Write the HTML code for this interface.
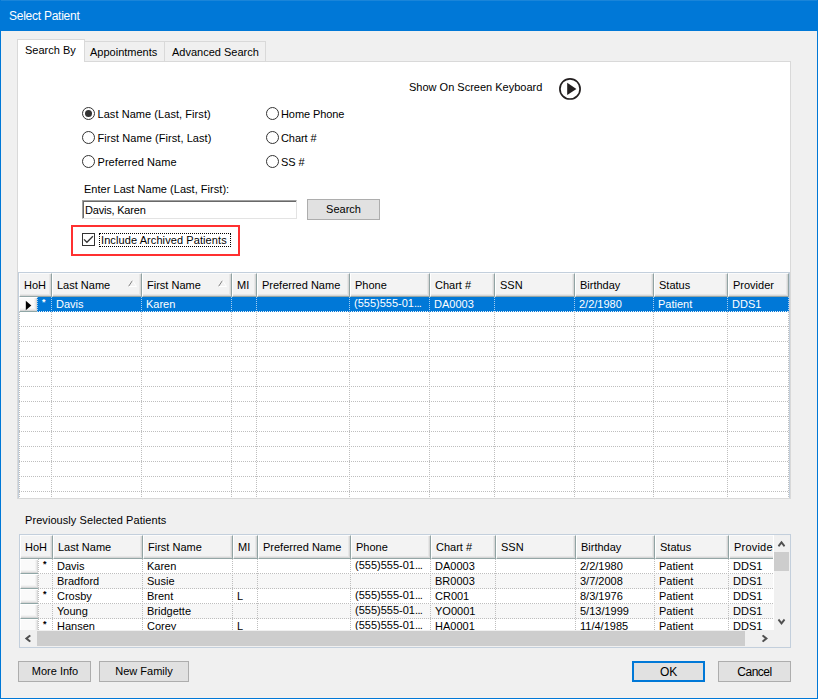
<!DOCTYPE html><html><head><meta charset="utf-8"><title>Select Patient</title><style>
html,body{margin:0;padding:0;}
body{width:818px;height:699px;overflow:hidden;background:#f0f0f0;font-family:"Liberation Sans",sans-serif;font-size:11px;color:#000;position:relative;}
div,span{position:absolute;box-sizing:border-box;white-space:nowrap;}
.t,.c{line-height:13px;height:13px;}
#frame{left:0;top:0;width:818px;height:699px;border:1px solid #0078d7;border-top:none;}
#title{left:0;top:0;width:818px;height:31px;background:#0078d7;box-shadow:inset 1px 0 0 #1a85d9,inset -1px 0 0 #1a85d9,inset 0 1px 0 #1a85d9;}
#title span{left:9px;top:8px;color:#fff;font-size:12px;line-height:16px;letter-spacing:-0.25px;}
#page{left:17px;top:61px;width:774px;height:438px;background:#fff;border:1px solid #d9d9d9;}
.tab{top:41px;height:21px;background:#f0f0f0;border:1px solid #d9d9d9;border-bottom:none;}
.tab span{top:4px;}
#tab1{left:17px;top:39px;width:68px;height:23px;background:#fff;border:1px solid #d9d9d9;border-bottom:none;}
.radio{width:13px;height:13px;border:1px solid #333;border-radius:50%;background:#fff;}
.radio.on::after{content:"";position:absolute;left:2px;top:2px;width:7px;height:7px;border-radius:50%;background:#333;}
.btn{background:#e1e1e1;border:1px solid #adadad;text-align:center;height:21px;}
.btn span{left:0;right:0;text-align:center;}
.hdr{background:#f3f3f3;border-top:1px solid #fbfbfb;border-left:1px solid #fff;border-right:1px solid #91a3a3;border-bottom:1px solid #94a6a6;height:24px;box-shadow:inset -1px -1px 0 #d6d6d6, inset -2px -2px 0 #e7e7e7;overflow:hidden;}
.hdr span{left:5px;top:5px;}
.vl{width:1px;background-image:linear-gradient(#bebebe 50%,transparent 50%);background-size:1px 2px;}
.hl{height:1px;background-image:linear-gradient(90deg,#bebebe 50%,transparent 50%);background-size:2px 1px;}
.vw{width:1px;background-image:linear-gradient(#a6cdf0 50%,transparent 50%);background-size:1px 2px;}
.hw{height:1px;background-image:linear-gradient(90deg,#e8f0f8 50%,transparent 50%);background-size:2px 1px;}
.rs{background:#fafafa;border-top:1px solid #fff;border-left:1px solid #fff;border-bottom:1px solid #8fa6a6;box-shadow:inset -1px -1px 0 #d6d6d6, inset -2px -2px 0 #e9e9e9, inset -3px -3px 0 #f3f3f3;}
</style></head><body>
<div id="title"><span>Select Patient</span></div>
<div id="frame"></div>
<div class="tab" style="left:84px;width:81px;"><span class="t" style="left:5px;">Appointments</span></div>
<div class="tab" style="left:164px;width:102px;"><span class="t" style="left:7px;">Advanced Search</span></div>
<div id="page"></div>
<div id="tab1"><span class="t" style="left:7px;top:4px;">Search By</span></div>
<span class="t" style="left:409px;top:81px;">Show On Screen Keyboard</span>
<svg style="position:absolute;left:558px;top:77px" width="24" height="24" viewBox="0 0 24 24"><circle cx="12" cy="11.9" r="10.1" fill="#fff" stroke="#231f20" stroke-width="1.7"/><path d="M9.2 5.8 L18.4 11.95 L9.2 18.1 Z" fill="#231f20"/></svg>
<div class="radio on" style="left:82px;top:107px"></div><span class="t" style="left:97.5px;letter-spacing:0.06px;top:108px">Last Name (Last, First)</span>
<div class="radio" style="left:82px;top:131px"></div><span class="t" style="left:97.5px;letter-spacing:0.06px;top:132px">First Name (First, Last)</span>
<div class="radio" style="left:82px;top:155px"></div><span class="t" style="left:97.5px;letter-spacing:0.06px;top:156px">Preferred Name</span>
<div class="radio" style="left:266px;top:107px"></div><span class="t" style="left:281px;top:108px;letter-spacing:-0.08px">Home Phone</span>
<div class="radio" style="left:266px;top:131px"></div><span class="t" style="left:281px;top:132px;letter-spacing:-0.08px">Chart #</span>
<div class="radio" style="left:266px;top:155px"></div><span class="t" style="left:281px;top:156px;letter-spacing:-0.08px">SS #</span>
<span class="t" style="left:84px;top:183px;letter-spacing:0.03px">Enter Last Name (Last, First):</span>
<div style="left:82px;top:200px;width:215px;height:19px;background:#fff;border:1px solid #e3e3e3;border-top:1px solid #a0a0a0;border-left:1px solid #a0a0a0;box-shadow:inset 1px 1px 0 #696969;"><span class="t" style="left:2px;top:3px;letter-spacing:-0.2px">Davis, Karen</span></div>
<div class="btn" style="left:307px;top:199px;width:73px;"><span class="t" style="top:3px;">Search</span></div>
<div style="left:71px;top:225px;width:169px;height:31px;border:2px solid #ff3030;"></div>
<div style="left:82px;top:233px;width:13px;height:13px;border:1px solid #333;background:#fff;"></div>
<svg style="position:absolute;left:82px;top:233px" width="13" height="13" viewBox="0 0 13 13"><path d="M2 6.4 L4.9 9.3 L10.9 3.3" fill="none" stroke="#333" stroke-width="1.3"/></svg>
<div style="left:99px;top:233px;width:132px;height:14px;border:1px dotted #000;"></div>
<span class="t" style="left:101px;top:234px;letter-spacing:0.09px">Include Archived Patients</span>
<div style="left:18px;top:272px;width:772px;height:226px;border:1px solid #c3cfdc;border-bottom:none;background:#fff;"></div>
<div class="hdr" style="left:19px;top:273px;width:33px;"><span class="t" style="left:4px">HoH</span></div>
<div class="hdr" style="left:52px;top:273px;width:90px;"><span class="t" style="left:4px">Last Name</span><svg style="position:absolute;right:4px;top:6px" width="9" height="8" viewBox="0 0 9 8"><path d="M0.5 6.5 L4.5 0.5" stroke="#808080" stroke-width="1" fill="none"/><path d="M4.5 0.5 L8.5 6.5 L0.5 6.5" stroke="#fff" stroke-width="1" fill="none"/></svg></div>
<div class="hdr" style="left:142px;top:273px;width:90px;"><span class="t" style="left:4px">First Name</span><svg style="position:absolute;right:4px;top:6px" width="9" height="8" viewBox="0 0 9 8"><path d="M0.5 6.5 L4.5 0.5" stroke="#808080" stroke-width="1" fill="none"/><path d="M4.5 0.5 L8.5 6.5 L0.5 6.5" stroke="#fff" stroke-width="1" fill="none"/></svg></div>
<div class="hdr" style="left:232px;top:273px;width:25px;"><span class="t" style="left:4px">MI</span></div>
<div class="hdr" style="left:257px;top:273px;width:93px;"><span class="t" style="left:4px">Preferred Name</span></div>
<div class="hdr" style="left:350px;top:273px;width:80px;"><span class="t" style="left:4px">Phone</span></div>
<div class="hdr" style="left:430px;top:273px;width:65px;"><span class="t" style="left:4px">Chart #</span></div>
<div class="hdr" style="left:495px;top:273px;width:80px;"><span class="t" style="left:4px">SSN</span></div>
<div class="hdr" style="left:575px;top:273px;width:79px;"><span class="t" style="left:4px">Birthday</span></div>
<div class="hdr" style="left:654px;top:273px;width:74px;"><span class="t" style="left:4px">Status</span></div>
<div class="hdr" style="left:728px;top:273px;width:61px;"><span class="t" style="left:4px">Provider</span></div>
<div class="hl" style="left:19px;top:326px;width:770px;"></div>
<div class="hl" style="left:19px;top:341px;width:770px;"></div>
<div class="hl" style="left:19px;top:356px;width:770px;"></div>
<div class="hl" style="left:19px;top:371px;width:770px;"></div>
<div class="hl" style="left:19px;top:386px;width:770px;"></div>
<div class="hl" style="left:19px;top:401px;width:770px;"></div>
<div class="hl" style="left:19px;top:416px;width:770px;"></div>
<div class="hl" style="left:19px;top:431px;width:770px;"></div>
<div class="hl" style="left:19px;top:446px;width:770px;"></div>
<div class="hl" style="left:19px;top:461px;width:770px;"></div>
<div class="hl" style="left:19px;top:476px;width:770px;"></div>
<div class="hl" style="left:19px;top:491px;width:770px;"></div>
<div class="vl" style="left:19px;top:312px;height:185px;"></div>
<div class="vl" style="left:51px;top:312px;height:185px;"></div>
<div class="vl" style="left:141px;top:312px;height:185px;"></div>
<div class="vl" style="left:231px;top:312px;height:185px;"></div>
<div class="vl" style="left:256px;top:312px;height:185px;"></div>
<div class="vl" style="left:349px;top:312px;height:185px;"></div>
<div class="vl" style="left:429px;top:312px;height:185px;"></div>
<div class="vl" style="left:494px;top:312px;height:185px;"></div>
<div class="vl" style="left:574px;top:312px;height:185px;"></div>
<div class="vl" style="left:653px;top:312px;height:185px;"></div>
<div class="vl" style="left:727px;top:312px;height:185px;"></div>
<div class="vl" style="left:788px;top:312px;height:185px;"></div>
<div style="left:37px;top:297px;width:752px;height:15px;background:#0078d7;"></div>
<div class="hw" style="left:37px;top:311px;width:752px;"></div>
<div class="vw" style="left:37px;top:297px;height:15px;"></div>
<div class="vw" style="left:51px;top:297px;height:15px;"></div>
<div class="vw" style="left:141px;top:297px;height:15px;"></div>
<div class="vw" style="left:231px;top:297px;height:15px;"></div>
<div class="vw" style="left:256px;top:297px;height:15px;"></div>
<div class="vw" style="left:349px;top:297px;height:15px;"></div>
<div class="vw" style="left:429px;top:297px;height:15px;"></div>
<div class="vw" style="left:494px;top:297px;height:15px;"></div>
<div class="vw" style="left:574px;top:297px;height:15px;"></div>
<div class="vw" style="left:653px;top:297px;height:15px;"></div>
<div class="vw" style="left:727px;top:297px;height:15px;"></div>
<div class="vw" style="left:788px;top:297px;height:15px;"></div>
<div class="rs" style="left:19px;top:297px;width:18px;height:15px;background:#fafafa;"></div>
<svg style="position:absolute;left:25px;top:300px" width="7" height="11" viewBox="0 0 7 11"><path d="M0.8 0.8 L6.3 5.5 L0.8 10.2 Z" fill="#000"/></svg>
<span class="c" style="left:42px;top:296px;font-size:9px;font-weight:bold;color:#fff;">*</span>
<span class="c" style="left:56px;top:298px;color:#fff;">Davis</span>
<span class="c" style="left:146px;top:298px;color:#fff;">Karen</span>
<span class="c" style="left:354px;top:297px;color:#fff;">(555)555-01<span style="position:static;letter-spacing:-0.6px">...</span></span>
<span class="c" style="left:434px;top:298px;color:#fff;">DA0003</span>
<span class="c" style="left:579px;top:298px;color:#fff;">2/2/1980</span>
<span class="c" style="left:658px;top:298px;color:#fff;">Patient</span>
<span class="c" style="left:732px;top:298px;color:#fff;">DDS1</span>
<span class="t" style="left:25px;top:514px;letter-spacing:0.07px">Previously Selected Patients</span>
<div style="left:19px;top:534px;width:772px;height:114px;border:1px solid #c3cfdc;background:#fff;"></div>
<div style="left:20px;top:535px;width:753px;height:95px;overflow:hidden;">
<div class="hdr" style="left:0px;top:0;width:33px;"><span class="t" style="left:4px">HoH</span></div>
<div class="hdr" style="left:33px;top:0;width:90px;"><span class="t" style="left:4px">Last Name</span></div>
<div class="hdr" style="left:123px;top:0;width:90px;"><span class="t" style="left:4px">First Name</span></div>
<div class="hdr" style="left:213px;top:0;width:25px;"><span class="t" style="left:4px">MI</span></div>
<div class="hdr" style="left:238px;top:0;width:93px;"><span class="t" style="left:4px">Preferred Name</span></div>
<div class="hdr" style="left:331px;top:0;width:80px;"><span class="t" style="left:4px">Phone</span></div>
<div class="hdr" style="left:411px;top:0;width:65px;"><span class="t" style="left:4px">Chart #</span></div>
<div class="hdr" style="left:476px;top:0;width:80px;"><span class="t" style="left:4px">SSN</span></div>
<div class="hdr" style="left:556px;top:0;width:79px;"><span class="t" style="left:4px">Birthday</span></div>
<div class="hdr" style="left:635px;top:0;width:74px;"><span class="t" style="left:4px">Status</span></div>
<div class="hdr" style="left:709px;top:0;width:72px;"><span class="t" style="left:4px;letter-spacing:0.2px">Provider</span></div>
<div class="hl" style="left:18px;top:38px;width:740px;"></div>
<div class="rs" style="left:0;top:24px;width:18px;height:15px;"></div>
<span class="c" style="left:23px;top:23px;font-size:9px;font-weight:bold;">*</span>
<span class="c" style="left:37px;top:25px;">Davis</span>
<span class="c" style="left:127px;top:25px;">Karen</span>
<span class="c" style="left:335px;top:24px;">(555)555-01<span style="position:static;letter-spacing:-0.6px">...</span></span>
<span class="c" style="left:415px;top:25px;">DA0003</span>
<span class="c" style="left:560px;top:25px;">2/2/1980</span>
<span class="c" style="left:639px;top:25px;">Patient</span>
<span class="c" style="left:713px;top:25px;">DDS1</span>
<div style="left:18px;top:39px;width:740px;height:15px;background:#f7f7f7;"></div>
<div class="hl" style="left:18px;top:53px;width:740px;"></div>
<div class="rs" style="left:0;top:39px;width:18px;height:15px;"></div>
<span class="c" style="left:37px;top:40px;">Bradford</span>
<span class="c" style="left:127px;top:40px;">Susie</span>
<span class="c" style="left:415px;top:40px;">BR0003</span>
<span class="c" style="left:560px;top:40px;">3/7/2008</span>
<span class="c" style="left:639px;top:40px;">Patient</span>
<span class="c" style="left:713px;top:40px;">DDS1</span>
<div class="hl" style="left:18px;top:68px;width:740px;"></div>
<div class="rs" style="left:0;top:54px;width:18px;height:15px;"></div>
<span class="c" style="left:23px;top:53px;font-size:9px;font-weight:bold;">*</span>
<span class="c" style="left:37px;top:55px;">Crosby</span>
<span class="c" style="left:127px;top:55px;">Brent</span>
<span class="c" style="left:217px;top:55px;">L</span>
<span class="c" style="left:335px;top:54px;">(555)555-01<span style="position:static;letter-spacing:-0.6px">...</span></span>
<span class="c" style="left:415px;top:55px;">CR001</span>
<span class="c" style="left:560px;top:55px;">8/3/1976</span>
<span class="c" style="left:639px;top:55px;">Patient</span>
<span class="c" style="left:713px;top:55px;">DDS1</span>
<div style="left:18px;top:69px;width:740px;height:15px;background:#f7f7f7;"></div>
<div class="hl" style="left:18px;top:83px;width:740px;"></div>
<div class="rs" style="left:0;top:69px;width:18px;height:15px;"></div>
<span class="c" style="left:37px;top:70px;">Young</span>
<span class="c" style="left:127px;top:70px;">Bridgette</span>
<span class="c" style="left:335px;top:69px;">(555)555-01<span style="position:static;letter-spacing:-0.6px">...</span></span>
<span class="c" style="left:415px;top:70px;">YO0001</span>
<span class="c" style="left:560px;top:70px;">5/13/1999</span>
<span class="c" style="left:639px;top:70px;">Patient</span>
<span class="c" style="left:713px;top:70px;">DDS1</span>
<div class="hl" style="left:18px;top:98px;width:740px;"></div>
<div class="rs" style="left:0;top:84px;width:18px;height:15px;"></div>
<span class="c" style="left:23px;top:83px;font-size:9px;font-weight:bold;">*</span>
<span class="c" style="left:37px;top:85px;">Hansen</span>
<span class="c" style="left:127px;top:85px;">Corey</span>
<span class="c" style="left:217px;top:85px;">L</span>
<span class="c" style="left:335px;top:84px;">(555)555-01<span style="position:static;letter-spacing:-0.6px">...</span></span>
<span class="c" style="left:415px;top:85px;">HA0001</span>
<span class="c" style="left:560px;top:85px;">11/4/1985</span>
<span class="c" style="left:639px;top:85px;">Patient</span>
<span class="c" style="left:713px;top:85px;">DDS1</span>
<div class="vl" style="left:18px;top:24px;height:75px;"></div>
<div class="vl" style="left:32px;top:24px;height:75px;"></div>
<div class="vl" style="left:122px;top:24px;height:75px;"></div>
<div class="vl" style="left:212px;top:24px;height:75px;"></div>
<div class="vl" style="left:237px;top:24px;height:75px;"></div>
<div class="vl" style="left:330px;top:24px;height:75px;"></div>
<div class="vl" style="left:410px;top:24px;height:75px;"></div>
<div class="vl" style="left:475px;top:24px;height:75px;"></div>
<div class="vl" style="left:555px;top:24px;height:75px;"></div>
<div class="vl" style="left:634px;top:24px;height:75px;"></div>
<div class="vl" style="left:708px;top:24px;height:75px;"></div>
</div>
<div style="left:774px;top:535px;width:16px;height:95px;background:#f0f0f0;"></div>
<div style="left:774px;top:552px;width:15px;height:19px;background:#cdcdcd;"></div>
<div style="left:20px;top:630px;width:770px;height:17px;background:#f0f0f0;"></div>
<div style="left:37px;top:631px;width:708px;height:15px;background:#cdcdcd;"></div>
<svg style="position:absolute;left:777px;top:540px" width="9" height="8" viewBox="0 0 9 8"><polygon points="4.5,0.8 8.2,5.5 6.9,7.0 4.5,4.0 2.1,7.0 0.8,5.5" fill="#505050"/></svg>
<svg style="position:absolute;left:777px;top:618.4px" width="9" height="8" viewBox="0 0 9 8"><polygon points="4.5,7.0 8.2,2.3 6.9,0.8 4.5,3.8 2.1,0.8 0.8,2.3" fill="#505050"/></svg>
<svg style="position:absolute;left:761.2px;top:634px" width="8" height="9" viewBox="0 0 8 9"><polygon points="7.0,4.5 2.3,8.2 0.8,6.9 3.8,4.5 0.8,2.1 2.3,0.8" fill="#505050"/></svg>
<svg style="position:absolute;left:24.4px;top:634px" width="8" height="9" viewBox="0 0 8 9"><polygon points="0.8,4.5 5.5,8.2 7.0,6.9 4.0,4.5 7.0,2.1 5.5,0.8" fill="#505050"/></svg>
<div class="btn" style="left:18px;top:661px;width:73px;"><span class="t" style="top:3px;padding-left:1px">More Info</span></div>
<div class="btn" style="left:99px;top:661px;width:90px;"><span class="t" style="top:3px;">New Family</span></div>
<div class="btn" style="left:632px;top:661px;width:73px;border:2px solid #0078d7;"><span class="t" style="top:3px;font-size:12px;letter-spacing:-0.2px">OK</span></div>
<div class="btn" style="left:718px;top:661px;width:73px;"><span class="t" style="top:4px;font-size:12px;letter-spacing:-0.5px">Cancel</span></div>
</body></html>
